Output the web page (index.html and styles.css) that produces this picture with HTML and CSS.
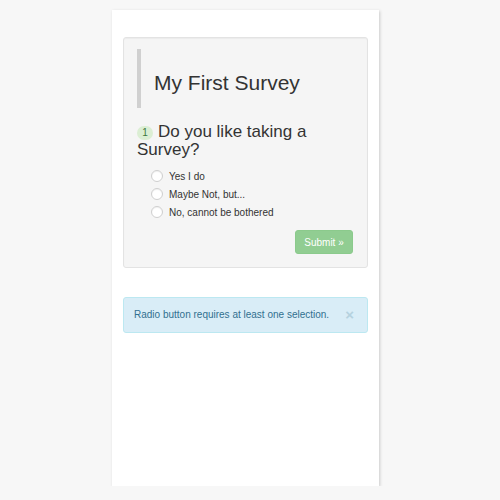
FILE: index.html
```html
<!DOCTYPE html>
<html>
<head>
<meta charset="utf-8">
<link rel="stylesheet" href="styles.css">
</head>
<body>
<div class="card">
  <div class="well">
    <blockquote class="title-block">
      <h2 class="title">My First Survey</h2>
    </blockquote>
    <h3 class="question"><span class="badge">1</span><span>Do you like taking a</span><br><span>Survey?</span></h3>
    <div class="options">
      <label class="option"><span class="radio"></span>Yes I do</label>
      <label class="option"><span class="radio"></span>Maybe Not, but...</label>
      <label class="option"><span class="radio"></span>No, cannot be bothered</label>
    </div>
    <div class="actions">
      <button class="btn-submit">Submit »</button>
    </div>
  </div>
  <div class="alert">
    <span class="alert-text">Radio button requires at least one selection.</span>
    <span class="close">×</span>
  </div>
</div>
</body>
</html>
```
FILE: styles.css
```css
html, body {
  margin: 0;
  padding: 0;
  background: #f7f7f7;
  font-family: "Liberation Sans", Arial, sans-serif;
  color: #333;
}
.card {
  box-sizing: border-box;
  width: 267px;
  height: 476px;
  margin: 10px 0 0 112px;
  background: #fff;
  box-shadow: 1px 1px 3px rgba(0,0,0,0.18);
  padding: 27px 11px 0 11px;
}
.well {
  box-sizing: border-box;
  background: #f5f5f5;
  border: 1px solid #e3e3e3;
  border-radius: 3px;
  box-shadow: inset 0 1px 1px rgba(0,0,0,0.04);
  padding: 11px 14px 13px 13px;
  height: 231px;
}
.title-block {
  margin: 0;
  border-left: 4px solid #d0d0d0;
  padding: 22px 0 14px 13px;
}
.title {
  margin: 0;
  font-size: 21px;
  font-weight: normal;
  line-height: 23px;
  color: #333;
}
.question {
  margin: 15px 0 0 0;
  font-size: 17px;
  font-weight: normal;
  line-height: 18px;
  color: #333;
}
.badge {
  display: inline-block;
  width: 16px;
  height: 14px;
  border-radius: 8px;
  background: #dbeed3;
  color: #3c763d;
  font-size: 10px;
  line-height: 14px;
  text-align: center;
  vertical-align: 1px;
  margin-right: 5px;
}
.options {
  margin: 8px 0 0 14px;
  display: flex;
  flex-direction: column;
}
.option {
  display: flex;
  align-items: center;
  height: 18px;
  font-size: 10px;
  color: #333;
}
.radio {
  box-sizing: border-box;
  width: 12px;
  height: 12px;
  border-radius: 50%;
  background: #fff;
  border: 1px solid #cfcfcf;
  box-shadow: inset 0 1px 1px rgba(0,0,0,0.06);
  margin-right: 6px;
}
.actions {
  display: flex;
  justify-content: flex-end;
  margin-top: 9px;
}
.btn-submit {
  height: 24px;
  width: 58px;
  padding: 0;
  border: 1px solid #8bca8c;
  border-radius: 3px;
  background: #91cd92;
  color: #fff;
  font-family: "Liberation Sans", Arial, sans-serif;
  font-size: 10px;
  font-weight: normal;
}
.alert {
  box-sizing: border-box;
  margin-top: 29px;
  height: 36px;
  background: #d9edf7;
  border: 1px solid #bce8f1;
  border-radius: 3px;
  color: #31708f;
  font-size: 10px;
  line-height: 14px;
  padding: 10px 13px 10px 10px;
  display: flex;
  justify-content: space-between;
  align-items: center;
}
.close {
  font-size: 15px;
  font-weight: bold;
  color: #b5d2df;
  line-height: 14px;
}
```
